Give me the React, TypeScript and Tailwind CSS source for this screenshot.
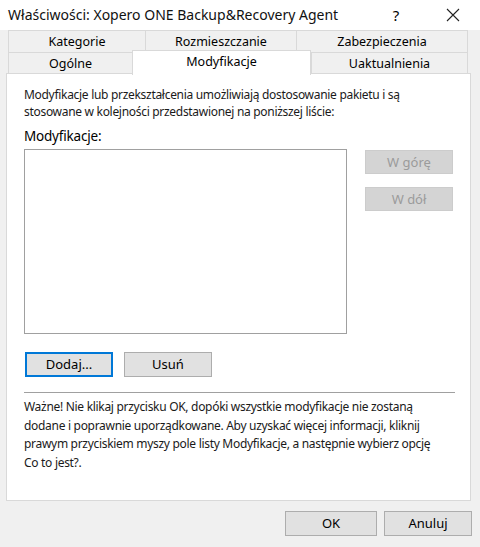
import React from "react";

const font = { fontFamily: '"Noto Sans", "Open Sans", Arial, sans-serif' };

function Tab({ label, w, selected, last }: { label: string; w: string; selected?: boolean; last?: boolean }) {
  if (selected) {
    return (
      <div
        className={`${w} relative z-10 -mt-[2px] h-[25px] border-t border-l border-r border-[#d9d9d9] bg-white flex items-start justify-center pt-[2px] text-[12.5px] leading-[17px] text-black whitespace-nowrap`}
      >
        {label}
      </div>
    );
  }
  return (
    <div
      className={`${w} h-[22px] border-t border-l ${last ? "border-r" : ""} border-[#d9d9d9] bg-[#f0f0f0] flex items-center justify-center text-[12.5px] leading-[17px] text-black whitespace-nowrap`}
    >
      {label}
    </div>
  );
}

function Btn({ children, w, disabled, focused }: { children: React.ReactNode; w: string; disabled?: boolean; focused?: boolean }) {
  const base = "flex items-center justify-center text-[13px] leading-[17px] whitespace-nowrap";
  if (disabled)
    return <div className={`${w} ${base} h-[24px] bg-[#d4d4d4] border border-[#cccccc] text-[#9b9b9b]`}>{children}</div>;
  if (focused)
    return <div className={`${w} ${base} h-[25px] bg-[#e1e1e1] border-2 border-[#0078d7] text-black`}>{children}</div>;
  return <div className={`${w} ${base} h-[25px] bg-[#e1e1e1] border border-[#adadad] text-black`}>{children}</div>;
}

export default function App() {
  return (
    <div className="w-[480px] h-[547px] bg-[#f0f0f0] flex flex-col text-black overflow-hidden" style={font}>
      {/* Title bar */}
      <div className="h-[30px] bg-white flex items-center pl-[8px] pr-[19px] shrink-0">
        <div className="text-[14px] leading-[20px] flex-1 text-[#111] whitespace-nowrap">
          Właściwości: Xopero ONE Backup&amp;Recovery Agent
        </div>
        <div className="text-[15px] leading-[20px] w-[14px] text-center mr-[42px]">?</div>
        <div className="w-[16px] h-[16px] flex items-center justify-center">
          <svg width="14" height="14" viewBox="0 0 14 14">
            <path d="M1 1 L13 13 M13 1 L1 13" stroke="#222" strokeWidth="1.1" />
          </svg>
        </div>
      </div>

      {/* Tabs */}
      <div className="flex flex-col pl-[8px] shrink-0">
        <div className="flex">
          <Tab label="Kategorie" w="w-[137px]" />
          <Tab label="Rozmieszczanie" w="w-[151px]" />
          <Tab label="Zabezpieczenia" w="w-[172px]" last />
        </div>
        <div className="flex h-[22px]">
          <Tab label="Ogólne" w="w-[124px]" />
          <Tab label="Modyfikacje" w="w-[179px]" selected />
          <Tab label="Uaktualnienia" w="w-[157px]" last />
        </div>
      </div>

      {/* Panel */}
      <div className="ml-[6px] w-[465px] h-[428px] border border-[#d9d9d9] bg-white flex flex-col px-[17px] shrink-0 -mt-px">
        <div className="mt-[12px] text-[12px] tracking-[-0.3px] leading-[17px] text-[#1a1a1a] whitespace-nowrap">
          Modyfikacje lub przekształcenia umożliwiają dostosowanie pakietu i są
          <br />
          stosowane w kolejności przedstawionej na poniższej liście:
        </div>
        <div className="mt-[7px] text-[13.5px] tracking-[-0.2px] leading-[19px]">Modyfikacje:</div>
        <div className="mt-[3px] flex">
          <div className="w-[325px] h-[185px] border border-[#a0a0a0] bg-white" />
          <div className="ml-[18px] mt-px flex flex-col gap-[13px]">
            <Btn w="w-[88px]" disabled>W górę</Btn>
            <Btn w="w-[88px]" disabled>W dół</Btn>
          </div>
        </div>
        <div className="mt-[18px] flex gap-[11px] pl-px">
          <Btn w="w-[88px]" focused>Dodaj...</Btn>
          <Btn w="w-[88px]">Usuń</Btn>
        </div>
        <div className="mt-[15px] w-[431px] h-px bg-[#a0a0a0]" />
        <div className="mt-[5px] text-[12px] tracking-[-0.3px] leading-[18.7px] text-[#1a1a1a] whitespace-nowrap">
          Ważne! Nie klikaj przycisku OK, dopóki wszystkie modyfikacje nie zostaną
          <br />
          dodane i poprawnie uporządkowane. Aby uzyskać więcej informacji, kliknij
          <br />
          prawym przyciskiem myszy pole listy Modyfikacje, a następnie wybierz opcję
          <br />
          Co to jest?.
        </div>
      </div>

      {/* Bottom buttons */}
      <div className="flex justify-end gap-[7px] pr-[8px] mt-[10px]">
        <Btn w="w-[92px]">OK</Btn>
        <Btn w="w-[88px]">Anuluj</Btn>
      </div>
    </div>
  );
}
